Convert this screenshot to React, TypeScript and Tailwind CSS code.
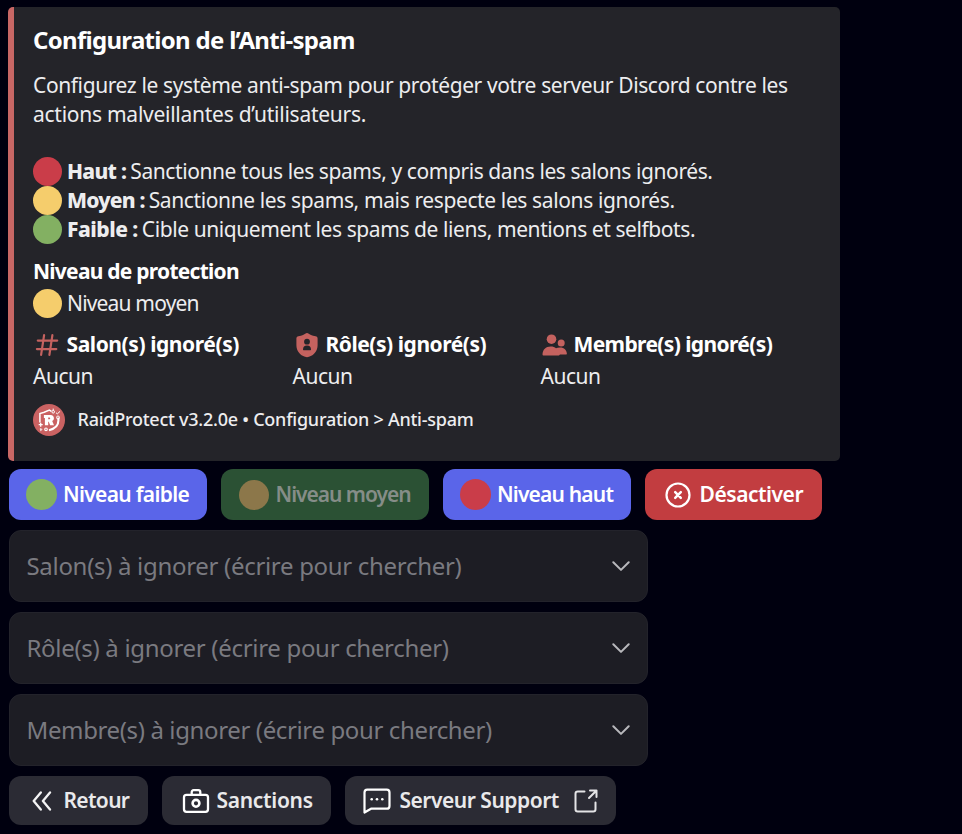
import type { ReactNode } from "react";

function Dot({ className }: { className: string }) {
  return <span className={`block shrink-0 rounded-full ${className}`} />;
}

function Level({ color, label, children }: { color: string; label: ReactNode; children: ReactNode }) {
  return (
    <li className="flex h-[29px] items-center">
      <Dot className={`mr-[5px] size-[29px] ${color}`} />
      {label}
      {children}
    </li>
  );
}

function HashIcon() {
  return (
    <svg viewBox="0 0 24 24" className="size-6 shrink-0" fill="none" stroke="#c4625f" strokeWidth="2.2" strokeLinecap="round">
      <path d="M9.100 2.200 6.100 21.800M17.400 2.200l-3 19.600M2.800 7.600h19.400M1.900 16.100h19.400" />
    </svg>
  );
}

function ShieldIcon() {
  return (
    <svg viewBox="0 0 24 26" className="h-[26px] w-6 shrink-0">
      <path fill="#c4625f" d="M12 1c1.2 0 2.1 1.5 4.6 2.3 2.200.7 3.700.6 4.900 1.300.9.500 1.100 1.100 1.100 2.400v6.200c0 5.800-3.700 9.900-8.600 11.600-1.400.5-2.600.5-4 0C5.100 23.100 1.400 19 1.400 13.200V7c0-1.300.2-1.900 1.100-2.400 1.200-.7 2.700-.6 4.900-1.300C9.900 2.500 10.800 1 12 1Z" />
      <circle cx="12" cy="9.700" r="2.900" fill="#242429" />
      <path fill="#242429" d="M8 17.600c0-2.800 1.400-4.200 4-4.200s4 1.400 4 4.200c0 .4-.2.6-.6.6H8.600c-.4 0-.6-.2-.6-.6Z" />
    </svg>
  );
}

function MembersIcon() {
  return (
    <svg viewBox="0 0 26 24" className="h-6 w-[26px] shrink-0" fill="#c4625f">
      <circle cx="9.500" cy="6.200" r="4.800" />
      <circle cx="19.200" cy="9.900" r="3.500" />
      <path d="M.5 21.600C.7 16.600 3.700 13.500 8.700 13.500c2.300 0 4 .6 5.300 1.700 1.100-.5 2.400-.8 4-.8 4.300 0 6.600 2.500 6.900 6.300 0 .5-.2.700-.7.700h-6.300c-.4.600-.9 1.200-1.500 1.200H1.400c-.6 0-.9-.3-.9-1Z" />
    </svg>
  );
}

function BrandIcon() {
  return (
    <svg viewBox="0 0 32 32" className="size-8 shrink-0">
      <circle cx="16" cy="16" r="16" fill="#ca6262" />
      <g fill="none" stroke="#fff" strokeWidth="1.500">
        <path d="M6.900 18.500V9.500l4.300-1.200L16.400 6.100l2 1.300" />
        <path d="M5.700 20.700h4M7.700 18.800v3.900" strokeWidth="1.300" />
        <path d="M25.400 13.500v3c0 4.800-3.300 8.200-9.400 9.700" strokeWidth="2.100" />
        <path d="m23 8.700 1.300 1.200 2.800-2.600" strokeWidth="1" />
        <circle cx="20.200" cy="7.800" r="1.300" strokeWidth="1" />
        <path d="M20.200 4.600v2" strokeWidth="1" />
        <circle cx="13" cy="25.300" r="1.300" strokeWidth="1.100" />
        <path d="m7.300 24.600 1.900.8-1.600 1.300Z" strokeWidth=".8" />
        <circle cx="25" cy="13.500" r="1.500" strokeWidth=".9" />
      </g>
      <path fill="#fff" fillRule="evenodd" d="M10.900 10.900h6.600c2.300 0 3.400 1.500 3.400 3.300 0 1.400-.7 2.300-1.700 2.800l1.800 4.200h-3.900l-1.300-3.500h-.6v3.500h-3.300v-7.300h-1Zm4.300 2.500v1.800h1.200c1.100 0 1.100-1.800 0-1.800Z" />
    </svg>
  );
}

function CloseCircleIcon() {
  return (
    <svg viewBox="0 0 26 26" className="size-[26px] shrink-0" fill="none" stroke="#fff" strokeWidth="2.200">
      <circle cx="13" cy="13" r="11.500" />
      <path d="m10.200 10.200 5.600 5.600m0-5.600-5.600 5.600" strokeWidth="2.500" strokeLinecap="round" />
    </svg>
  );
}

function BackIcon() {
  return (
    <svg viewBox="0 0 20 20" className="size-5 shrink-0" fill="none" stroke="#f4f4f5" strokeWidth="2.300" strokeLinecap="round" strokeLinejoin="round">
      <path d="M8.800 1.500 1.700 10l7.100 8.500M18 1.500 10.900 10l7.100 8.500" />
    </svg>
  );
}

function CaseIcon() {
  return (
    <svg viewBox="0 0 28 26" className="h-[26px] w-7 shrink-0" fill="none" stroke="#fff" strokeWidth="2.300">
      <rect x="2" y="6.800" width="24" height="17" rx="2.500" />
      <path d="M9.700 6.800V4.200c0-1.300.7-2 2-2h4.600c1.300 0 2 .7 2 2v2.600" />
      <circle cx="14" cy="15.300" r="3.400" strokeWidth="2.600" />
    </svg>
  );
}

function ChatIcon() {
  return (
    <svg viewBox="0 0 28 26" className="h-[26px] w-7 shrink-0" fill="none" stroke="#fff" strokeWidth="2.200" strokeLinejoin="round">
      <path d="M4.300 1.700h19.400c1.800 0 2.800 1 2.800 2.800v13.400c0 1.800-1 2.800-2.800 2.800H8L1.500 24.500v-20c0-1.800 1-2.800 2.800-2.800Z" />
      <g fill="#fff" stroke="none">
        <circle cx="8.700" cy="11.300" r="1.300" />
        <circle cx="14" cy="11.300" r="1.300" />
        <circle cx="19.300" cy="11.300" r="1.300" />
      </g>
    </svg>
  );
}

function ExternalIcon() {
  return (
    <svg viewBox="0 0 24 24" className="size-6 shrink-0" fill="none" stroke="#e4e4e6" strokeWidth="2" strokeLinecap="round" strokeLinejoin="round">
      <path d="M10.500 2.500H3.800c-1.500 0-2.300.8-2.300 2.300v15.400c0 1.500.8 2.300 2.300 2.300h15.400c1.500 0 2.300-.8 2.300-2.300v-6.700M16 1.500h6.500V8M22 2l-7 7" />
    </svg>
  );
}

function Select({ children }: { children: ReactNode }) {
  return (
    <button className="flex h-[72px] w-[639px] items-center justify-between rounded-xl border border-[#23232b] bg-[#1d1d24] pr-[17px] pl-[17px] text-2xl text-[#7a7a80]">
      {children}
      <svg viewBox="0 0 18 10" className="h-2.5 w-[18px]" fill="none" stroke="#b8b8bc" strokeWidth="2" strokeLinecap="round" strokeLinejoin="round">
        <path d="m1.300 1.200 7.700 7.700 7.700-7.700" />
      </svg>
    </button>
  );
}

export default function App() {
  return (
    <main className="h-[834px] w-[962px] overflow-hidden bg-[#00000f] pt-[7px] pl-2 font-['Noto_Sans','Open_Sans',sans-serif] whitespace-nowrap">
      <article className="h-[454px] w-[831.5px] rounded-[5px] border-l-6 border-[#c86765] bg-[#242429] pt-[18px] pl-[19px] text-[21px] leading-[29px] text-[#ededef]">
        <h1 className="text-2xl leading-[30px] font-bold tracking-[-0.7px] text-white">Configuration de l’Anti-spam</h1>
        <p className="mt-4">
          <span className="block tracking-[-0.39px]">Configurez le système anti-spam pour protéger votre serveur Discord contre les</span>
          <span className="block tracking-[-0.26px]">actions malveillantes d’utilisateurs.</span>
        </p>
        <ul className="mt-7">
          <Level color="bg-[#ca3d49]" label={<b className="mr-1 font-extrabold tracking-[-0.7px]">Haut :</b>}>
            <span className="tracking-[-0.42px]">Sanctionne tous les spams, y compris dans les salons ignorés.</span>
          </Level>
          <Level color="bg-[#f5cd6c]" label={<b className="mr-1 font-extrabold tracking-[-0.8px]">Moyen :</b>}>
            <span className="tracking-[-0.38px]">Sanctionne les spams, mais respecte les salons ignorés.</span>
          </Level>
          <Level color="bg-[#83b062]" label={<b className="mr-1 font-extrabold tracking-[-0.5px]">Faible :</b>}>
            <span className="tracking-[-0.42px]">Cible uniquement les spams de liens, mentions et selfbots.</span>
          </Level>
        </ul>
        <section className="mt-[13px]">
          <h2 className="font-bold tracking-[-0.75px] text-white">Niveau de protection</h2>
          <div className="mt-[3px] flex items-center">
            <Dot className="mr-[5px] size-[29px] bg-[#f5cd6c]" />
            <span className="tracking-[-0.82px]">Niveau moyen</span>
          </div>
        </section>
        <section className="mt-3 flex">
          <div className="w-[259.5px]">
            <h2 className="flex items-center font-bold text-white">
              <span className="mr-[7.5px] ml-0.5 flex"><HashIcon /></span>
              <span className="tracking-[-0.42px]">Salon(s) ignoré(s)</span>
            </h2>
            <p className="mt-[3px] tracking-[-0.5px]">Aucun</p>
          </div>
          <div className="w-[248px]">
            <h2 className="flex items-center font-bold text-white">
              <span className="mr-[7px] ml-0.5 flex"><ShieldIcon /></span>
              <span className="tracking-[-0.46px]">Rôle(s) ignoré(s)</span>
            </h2>
            <p className="mt-[3px] tracking-[-0.5px]">Aucun</p>
          </div>
          <div>
            <h2 className="flex items-center font-bold text-white">
              <span className="mr-[6px] ml-px flex"><MembersIcon /></span>
              <span className="tracking-[-0.62px]">Membre(s) ignoré(s)</span>
            </h2>
            <p className="mt-[3px] tracking-[-0.5px]">Aucun</p>
          </div>
        </section>
        <footer className="mt-[13px] flex items-center text-lg font-medium tracking-[-0.25px]">
          <span className="mr-[12.5px] flex"><BrandIcon /></span>
          <span className="pb-0.5">RaidProtect v3.2.0e • Configuration &gt; Anti-spam</span>
        </footer>
      </article>

      <div className="mt-2 ml-[0.5px] flex h-[51px] gap-3.5 text-[21px] font-semibold text-white">
        <button className="flex w-[198px] items-center rounded-xl bg-[#5a65e9] pl-[17.5px]">
          <Dot className="mr-1.5 size-[31px] bg-[#83b062]" />
          <span className="tracking-[-0.68px]">Niveau faible</span>
        </button>
        <button className="flex w-[208px] items-center rounded-xl bg-[#2b5134] pl-[18px] text-[#858d88]">
          <Dot className="mr-[7px] size-[30px] bg-[#8c774a]" />
          <span className="tracking-[-1.02px]">Niveau moyen</span>
        </button>
        <button className="flex w-[188px] items-center rounded-xl bg-[#5a65e9] pl-[17.5px]">
          <Dot className="mr-1.5 size-[31px] bg-[#ca3d49]" />
          <span className="tracking-[-0.82px]">Niveau haut</span>
        </button>
        <button className="flex w-[177px] items-center rounded-xl bg-[#c23d40] pl-[20.5px]">
          <span className="mr-[8.5px] flex"><CloseCircleIcon /></span>
          <span className="tracking-[-0.46px]">Désactiver</span>
        </button>
      </div>

      <div className="mt-2.5 ml-[0.5px] flex flex-col gap-2.5">
        <Select><span className="tracking-[-0.31px]">Salon(s) à ignorer (écrire pour chercher)</span></Select>
        <Select><span className="tracking-[-0.31px]">Rôle(s) à ignorer (écrire pour chercher)</span></Select>
        <Select><span className="tracking-[-0.37px]">Membre(s) à ignorer (écrire pour chercher)</span></Select>
      </div>

      <div className="mt-2.5 ml-[0.5px] flex h-[49px] gap-3.5 text-[21px] font-semibold text-[#e9e9eb]">
        <button className="flex w-[139px] items-center rounded-xl bg-[#2b2b34] pl-[23px]">
          <span className="mr-3 flex"><BackIcon /></span>
          <span className="tracking-[-0.66px]">Retour</span>
        </button>
        <button className="flex w-[169px] items-center rounded-xl bg-[#2b2b34] pl-5">
          <span className="mr-[7px] flex"><CaseIcon /></span>
          <span className="tracking-[-0.3px]">Sanctions</span>
        </button>
        <button className="flex w-[271px] items-center rounded-xl bg-[#2b2b34] pl-[18px]">
          <span className="mr-[9px] flex"><ChatIcon /></span>
          <span className="mr-[15px] tracking-[-0.48px]">Serveur Support</span>
          <ExternalIcon />
        </button>
      </div>
    </main>
  );
}
